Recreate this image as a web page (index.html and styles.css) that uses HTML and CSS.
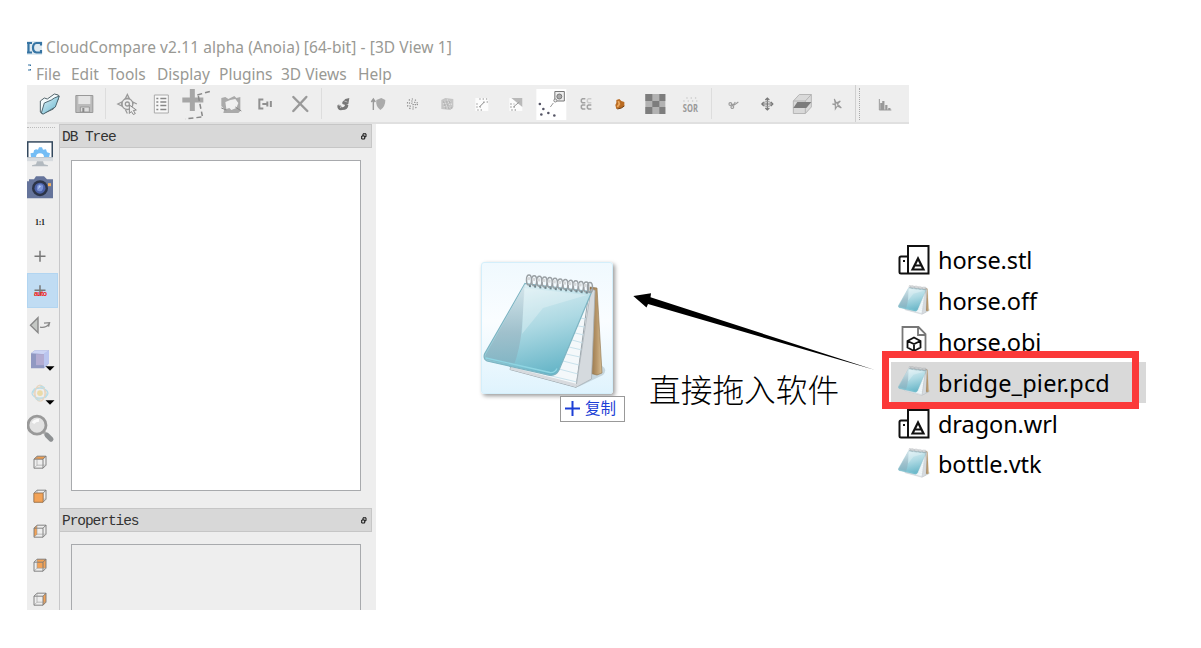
FILE: index.html
```html
<!DOCTYPE html>
<html lang="zh-CN">
<head>
<meta charset="utf-8">
<title>CloudCompare</title>
<link rel="stylesheet" href="styles.css">
</head>
<body>
<svg class="defs" width="0" height="0">
  <defs>
    <linearGradient id="glass" x1="0.2" y1="0" x2="0.5" y2="1">
      <stop offset="0" stop-color="#e3f2f6"/><stop offset="0.5" stop-color="#add9e3"/><stop offset="1" stop-color="#68b6c8"/>
    </linearGradient>
    <linearGradient id="glassSide" x1="0" y1="0" x2="0" y2="1">
      <stop offset="0" stop-color="#d2e4ea"/><stop offset="0.6" stop-color="#9dbcc8"/><stop offset="1" stop-color="#82b3c2"/>
    </linearGradient>
    <linearGradient id="wood" x1="0" y1="0" x2="1" y2="0">
      <stop offset="0" stop-color="#8b6b42"/><stop offset="0.6" stop-color="#b8976a"/><stop offset="1" stop-color="#d6bd93"/>
    </linearGradient>
    <linearGradient id="folder" x1="0" y1="0" x2="1" y2="1">
      <stop offset="0" stop-color="#e4f5fa"/><stop offset="1" stop-color="#5fb2cc"/>
    </linearGradient>
    <symbol id="notepad" viewBox="0 0 124 116">
      <path d="M107 88Q128 92 120 101L95 113z" fill="#889aa2" opacity=".35"/>
      <path d="M107 13l7 1 5 85-5 2-8-2z" fill="url(#wood)" stroke="#8d7047" stroke-width=".6"/>
      <path d="M106 17L93 113.300 27 95.500l1-3 45-70z" fill="#f4f8fa" stroke="#9aa5ab" stroke-width="1"/>
      <path d="M97 44l6 1M95 52l7 1M92 59l9 2M89 66l11 3M86 73l13 3M83 80l14 3M80 87l16 4M76 95l19 5M60 100l34 8" stroke="#c9e2ec" stroke-width="1"/>
      <path d="M108 15l4 1.500-3.500 88.500L93 113.300z" fill="#d5dade" stroke="#a9b1b6" stroke-width=".8"/>
      <path d="M28 93l66 17-.7 3.300L27 95.500z" fill="#d7dade"/>
      <path d="M42 9.500L108.700 17.700 76 96q-3 6-9 5.300L4 87Q0 85 1.500 80z" fill="url(#glass)" stroke="#7db4c2" stroke-width="1.200"/>
      <path d="M42 10L39 53Q37 75 31 91L5 86Q1 84 3 80z" fill="url(#glassSide)" opacity=".85"/>
      <path d="M41 14L104 21 60 34 39 60z" fill="#fff" opacity=".25"/>
      <path d="M3 84l64 14.500q5 .5 7-4" fill="none" stroke="#8fd5e2" stroke-width="1.300"/>
      <g fill="none" stroke="#9aa0a4" stroke-width="1.500">
        <ellipse cx="46" cy="6" rx="2.500" ry="5"/><ellipse cx="51.200" cy="6.700" rx="2.500" ry="5"/><ellipse cx="56.400" cy="7.300" rx="2.500" ry="5"/><ellipse cx="61.600" cy="8" rx="2.500" ry="5"/><ellipse cx="66.800" cy="8.600" rx="2.500" ry="5"/><ellipse cx="72" cy="9.200" rx="2.500" ry="5"/><ellipse cx="77.200" cy="9.900" rx="2.500" ry="5"/><ellipse cx="82.400" cy="10.500" rx="2.500" ry="5"/><ellipse cx="87.600" cy="11.200" rx="2.500" ry="5"/><ellipse cx="92.800" cy="11.800" rx="2.500" ry="5"/><ellipse cx="98" cy="12.400" rx="2.500" ry="5"/><ellipse cx="103.200" cy="13" rx="2.500" ry="5"/><ellipse cx="107" cy="13.500" rx="2.500" ry="5"/>
      </g>
      <path d="M44 4.500L107 12" stroke="#d5d8da" stroke-width="3" stroke-dasharray="3 2.200"/>
      <path d="M46 12L107 19" stroke="#6d858c" stroke-width="2" stroke-dasharray="2 3.200"/>
    </symbol>
    <symbol id="printer" viewBox="0 0 32 32">
      <g fill="none" stroke="#111" stroke-width="2"><path d="M10 2h20.500v27.500H10zM10 12.500H3q-1.500 0-1.500 1.500v14q0 1.500 1.500 1.500h7"/><path d="M14.500 25.500L20 14.500l5.500 11zM17 21.500h6" stroke-width="2.200"/></g>
      <path d="M5 16h2v2H5z" fill="#111"/>
    </symbol>
    <symbol id="cube" viewBox="-8 -8 16 16">
      <path d="M-6-3h9v9h-9zM-6-3l3-3h9v9l-3 3M3-3l3-3" fill="none" stroke="#777" stroke-width=".9"/><path d="M-3-6v9h9M-6 6l3-3" fill="none" stroke="#999" stroke-width=".6"/>
    </symbol>
  </defs>
</svg>

<main class="stage">
  <header class="titlebar">
    <svg class="logo" width="17" height="18" viewBox="0 0 17 18"><path fill="#dfeaf1" d="M0 2h15v14H0z"/><path d="M0 4h5M1.500 4v9M0 13.500h5M14 6.500V4H9.500Q6 4.500 6 8.700t3.500 4.800H14V11" fill="none" stroke="#3674a3" stroke-width="2.200"/></svg>
    <span>CloudCompare v2.11 alpha (Anoia) [64-bit] - [3D View 1]</span>
  </header>
  <nav class="menubar">
    <svg class="mini" width="4" height="8" viewBox="0 0 4 8"><path d="M3.500 2V1H1M1 6h2.500V5" fill="none" stroke="#3674a3" stroke-width="1.200"/></svg>
    <span class="m-file">File</span><span class="m-edit">Edit</span><span class="m-tools">Tools</span><span class="m-display">Display</span><span class="m-plugins">Plugins</span><span class="m-views">3D Views</span><span class="m-help">Help</span>
  </nav>

  <div class="toolbar">
    <svg class="tool" viewBox="-17 -19 34 38"><path d="M-9 8V-3l4-3 3 1 7-5 4 1v4L4 5-7 10z" fill="#f3fafc" stroke="#54656c"/><path d="M-8 9L-5-1 2-4 5-6 10-8 6 3-6 10z" fill="url(#folder)" stroke="#4f6872"/></svg>
    <svg class="tool" viewBox="-17 -19 34 38"><path d="M-8.500-8.500h17v17h-17z" fill="#bbb" stroke="#999"/><path d="M-6-8H6v8H-6z" fill="#e4e4e4"/><path d="M-4 3h9v5h-9z" fill="#ddd" stroke="#999"/><path d="M-2 4h2v4h-2z" fill="#888"/></svg>
    <i class="sep"></i>
    <svg class="tool" viewBox="-17 -19 34 38"><g fill="none" stroke="#999" stroke-width="1.300"><circle r="5.500"/><circle r="2"/><path d="M-9.500 0l4-2v4zM0-9.500l-2 4h4zM9.500 0l-4-2v2M0 9.500l-2-4"/></g><path d="M2 1l7 5-3 .5 2 3-2 1-2-3-2 2z" fill="#eee" stroke="#888"/></svg>
    <svg class="tool" viewBox="-17 -19 34 38"><path d="M-7-9H7V9H-7z" fill="#f8f8f8" stroke="#aaa"/><path d="M-5-5.500h2m2 0h6M-5-2h2m2 0h6M-5 1.500h2m2 0h6M-5 5.500h2m2 0h6" stroke="#888" stroke-width="1.400"/></svg>
    <svg class="tool" viewBox="-17 -19 34 38"><path d="M-14-4H7M-4-15V7" stroke="#a6a6a6" stroke-width="5"/><path d="M1-9l14-4M2-8l4 20M5 13l-16 2" fill="none" stroke="#888" stroke-width="1.500" stroke-dasharray="5 3"/></svg>
    <svg class="tool" viewBox="-17 -19 34 38"><path d="M-10-6l4-1 3 2 6-3 2 2 4-1v14l-2 2H-8l1-4-3-3z" fill="#aaa"/><path d="M-6-2l5-2 5-1 3 4-2 5-5 2-2-2-3 1z" fill="#f0f0f0"/><path d="M-10 4l5 2M4 3l6 4" fill="none" stroke="#888"/></svg>
    <svg class="tool" viewBox="-17 -19 34 38"><path d="M-2-4.500h-4v9h4M-3 0h5M2-2.500v5M5.500-3v6" fill="none" stroke="#909090" stroke-width="2"/></svg>
    <svg class="tool" viewBox="-17 -19 34 38"><path d="M-7-7L7 7M6-7L-7 7" stroke="#999" stroke-width="2.400" stroke-linecap="round"/></svg>
    <i class="sep"></i>
    <svg class="tool" viewBox="-17 -19 34 38"><path d="M-6 2q0-2 3-1l1 2q3 1 4-3l3 1q0 5-6 5-5 1-5-4zM-1-2l3-3 4-1-1 6-3 1-3-1z" fill="#777"/><path d="M-5 1l3 1-1 2M1-3l3 1" stroke="#bbb" fill="none"/></svg>
    <svg class="tool" viewBox="-17 -19 34 38"><path d="M-5 6v-11m-2 3l2-3 2 3" fill="none" stroke="#999" stroke-width="1.400"/><path d="M-2-4l5-2 4 2Q7 3 2 6-3 2-2-4z" fill="#aaa"/></svg>
    <svg class="tool" viewBox="-17 -19 34 38"><g fill="none" stroke="#888" stroke-width="1.200" stroke-dasharray="1.200 2"><circle r="5"/><circle r="3"/><circle r="1"/></g></svg>
    <svg class="tool" viewBox="-17 -19 34 38"><path d="M-6-4l4-2 8 1v8l-3 3-9-1z" fill="#c5c5c5"/><g fill="none" stroke="#eee" stroke-dasharray="1 2"><circle r="4"/><circle r="2"/></g><path d="M-4-2h8M-3 1h6M-2 4h7" stroke="#999" stroke-dasharray="1 2"/></svg>
    <svg class="tool" viewBox="-17 -19 34 38"><path d="M-7-6H6V7H-7z" fill="#fcfcfc"/><path d="M-3 3L2-2" stroke="#888"/><path d="M-3-5H6M1-2h5M-6 0h3M-6 3h5M-5 6h5" stroke="#888" stroke-width="1.200" stroke-dasharray="1.300 2"/></svg>
    <svg class="tool" viewBox="-17 -19 34 38"><path d="M-7-6H6V7H-7z" fill="#fcfcfc"/><path d="M-5-6H6V3z" fill="#b9b9b9"/><path d="M-3 3L3-2" stroke="#999"/><path d="M-6 0h4M-6 3h5M-5 6h5" stroke="#777" stroke-width="1.200" stroke-dasharray="1.300 2"/></svg>
    <svg class="tool" viewBox="-17 -19 34 38"><path d="M-15-15h30v31h-30z" fill="#fff"/><g fill="#556"><circle cx="-11.500" cy="0" r="1.300"/><circle cx="-8" cy="5" r="1.300"/><circle cx="-10" cy="10.500" r="1.300"/><circle cx="-3" cy="9" r="1.300"/><circle cx="3" cy="11.500" r="1.300"/></g><path d="M-1 3L5-5" stroke="#999" stroke-dasharray="5 2"/><path d="M3.500-12.500H13V-3H3.500z" fill="#eee" stroke="#777"/><circle cx="8" cy="-7.500" r="2.500" fill="#aaa" stroke="#777"/><circle cx="4" cy="-3.500" r="1.500" fill="#eee" stroke="#888"/></svg>
    <svg class="tool" viewBox="-17 -19 34 38"><g fill="none" stroke="#a2a2a2" stroke-width="1.500"><path d="M-1-5.300h-3l-1 1v2l1 1h3M-1 .9h-3l-1 1v2l1 1h3M5 .9H2l-1 1v2l1 1h3"/><path d="M5-5.300H2l-1 1v2l1 1h3" stroke="#ccc"/></g></svg>
    <svg class="tool" viewBox="-17 -19 34 38"><path d="M-4-4l3-1 2 2 3 1v4l-3 2-5 1-1-4 1-2z" fill="#b96b22"/><path d="M-2-3l1 3-2 3" fill="none" stroke="#eba75d" stroke-width="1.800"/><path d="M-3 5l4-1 3-2" stroke="#6d3e13" fill="none"/></svg>
    <svg class="tool" viewBox="-17 -19 34 38"><path d="M-10-10h20v20h-20z" fill="#b2b2b2"/><path d="M-10-10h7v7h-7zM4-10h6v7H4zM-3-3h7v6h-7zM-10 3h7v7h-7zM4 3h6v7H4z" fill="#7d7d7d"/></svg>
    <svg class="tool" viewBox="-17 -19 34 38"><text class="sor" x="-7.500" y="8" textLength="15" lengthAdjust="spacingAndGlyphs">SOR</text><path d="M-7-3H7M-4-6H8" stroke="#bbb" stroke-dasharray="1.300 3"/></svg>
    <i class="sep"></i>
    <svg class="tool" viewBox="-17 -19 34 38"><g fill="none" stroke="#999" stroke-width="1.100"><circle cx="-3" cy="0" r="1.400"/><circle cx="-1" cy="3" r="1.400"/><path d="M-2 0l3 1 4-3M-1 2l3-4"/></g></svg>
    <svg class="tool" viewBox="-17 -19 34 38"><path d="M0-6V6M-5.500 0h11M-2-4l2-2 2 2M-2 4l2 2 2-2M-3.500-2l-2 2 2 2M3.500-2l2 2-2 2" fill="none" stroke="#777" stroke-width="1.200"/><ellipse rx="4" ry="2.500" fill="none" stroke="#999"/></svg>
    <svg class="tool" viewBox="-17 -19 34 38"><path d="M-9-3l6-6.500H9V3L3 9.500H-9zM-9-3H3v12.500M3-3l6-6.500" fill="#d9d9d9" stroke="#b0b0b0" stroke-width=".9"/><path d="M-9 4l4-6H9L4 4z" fill="#7b7b7b"/></svg>
    <svg class="tool" viewBox="-17 -19 34 38"><path d="M-3-5l2 4 4-2-3 3 4 4-4-2-2 3V1l-3-1h3z" fill="none" stroke="#999" stroke-width="1.100"/></svg>
    <i class="sep end"></i><i class="grip"></i>
    <svg class="tool hist" viewBox="-17 -19 34 38"><path d="M-5-5V6H7" fill="none" stroke="#999"/><path d="M-3 6V-1M-1 6V-3M2 6V1M5 6V4" stroke="#999" stroke-width="2.200"/></svg>
  </div>

  <div class="workspace">
    <aside class="sidebar">
      <svg class="side" viewBox="-13 -17 31 34"><path d="M-13-12h26V5h-26z" fill="#34495e"/><path d="M-11.500-10.500h23V4h-23z" fill="#fff"/><path d="M-9 4l-.5-4 3-.5L-6-3l2-1 2 .5L-1-6h3l1 2.500 3-.5 1 3 3 1-1 4H4q0-4-4-4t-4 4z" fill="#74bdf5"/><path d="M-13 4h26v4h-26z" fill="#d7dbdf"/><path d="M-3 8h6l1 3 4 1v1H-8v-1l4-1z" fill="#b2b9bf"/></svg>
      <svg class="side" viewBox="-13 -17 31 34"><path d="M-11-8h5l2-3h8l3 3h6v19h-26V-6h2z" fill="#65749b"/><circle cy="1" r="8" fill="#2c3448"/><circle cy="1" r="5.500" fill="#4c62a7"/><path d="M-3 3q-1-6 3-6 4 0 3 4-1 4-4 3z" fill="#7b93d6"/><path d="M-2 2l1-4 2 1z" fill="#b9cdf5"/><path d="M8-4h3v3H8z" fill="#f1b15e"/></svg>
      <svg class="side" viewBox="-13 -17 31 34"><text class="ratio" x="-5" y="3" textLength="10">1:1</text></svg>
      <svg class="side" viewBox="-13 -17 31 34"><path d="M-5.500 0h11M0-5.500v11" stroke="#777" stroke-width="1.500"/></svg>
      <svg class="side active" viewBox="-13 -17 31 34"><path d="M-5.500 0h11M0-5v10" stroke="#777" stroke-width="1.500"/><text class="auto" x="-6" y="5.800" textLength="13">auto</text></svg>
      <svg class="side" viewBox="-13 -17 31 34"><path d="M-2-7.500v15L-9.500 0z" fill="#c5c8c5" stroke="#888" stroke-width="1.400"/><path d="M0 2q6 1 9-3M4-2l5.500-.5-1 4" fill="none" stroke="#888" stroke-width="1.400"/></svg>
      <svg class="side" viewBox="-13 -17 31 34"><path d="M-9-6l4-3H9V4L4 9H-9z" fill="#9098c2"/><path d="M-9-6l4-3H9L5-5z" fill="#ccd4f4"/><path d="M4-6l5-3V4L4 9z" fill="#bac5ef"/><path d="M-4-5h8V6h-8z" fill="#b3acd2"/><path d="M5.500 7h9l-4.500 4.500z"/></svg>
      <svg class="side" viewBox="-13 -17 31 34"><g fill="none" stroke-width="1.200"><circle r="6" stroke="#e9d7bd"/><ellipse rx="8" ry="5" stroke="#b6dce9"/><ellipse rx="5" ry="8" stroke="#e8d4bf"/><circle r="7" stroke="#b9dfe9" stroke-dasharray="5 6"/></g><circle r="2.800" fill="#ebdba8"/><path d="M5.500 7h9l-4.500 4.500z"/></svg>
      <svg class="side" viewBox="-13 -17 31 34"><path d="M4 4l3 3" stroke="#aaa" stroke-width="3"/><path d="M7 7l4 4" stroke="#8e9193" stroke-width="5" stroke-linecap="round"/><circle cx="-3" cy="-3" r="9" fill="#e2e2e2" stroke="#999" stroke-width="2.800"/><path d="M-7-5q2-3 6-3" stroke="#fafafa" stroke-width="3" fill="none"/></svg>
      <svg class="side" viewBox="-13 -17 31 34"><path d="M-6-3l3-3h9l-3 3z" fill="#ed9c50"/><use href="#cube" x="-8" y="-8" width="16" height="16"/></svg>
      <svg class="side" viewBox="-13 -17 31 34"><use href="#cube" x="-8" y="-8" width="16" height="16"/><path d="M-6-3h9v9h-9z" fill="#f3a357" stroke="#b07a45" stroke-width=".8"/></svg>
      <svg class="side" viewBox="-13 -17 31 34"><path d="M-6-3l3-3v9l-3 3z" fill="#f3a357"/><use href="#cube" x="-8" y="-8" width="16" height="16"/></svg>
      <svg class="side" viewBox="-13 -17 31 34"><path d="M-3-6h9v9h-9z" fill="#f3a357"/><use href="#cube" x="-8" y="-8" width="16" height="16"/></svg>
      <svg class="side" viewBox="-13 -17 31 34"><path d="M3-3l3-3v9l-3 3z" fill="#f3a357"/><use href="#cube" x="-8" y="-8" width="16" height="16"/></svg>
    </aside>

    <section class="docks">
      <div class="dock-title"><span>DB Tree</span><svg width="6" height="7" viewBox="0 0 6 7"><path d="M2 3V.8h3v3H4M.7 3h3v3h-3z" fill="none" stroke="#111" stroke-width="1"/></svg></div>
      <div class="tree"></div>
      <div class="dock-title"><span>Properties</span><svg width="6" height="7" viewBox="0 0 6 7"><path d="M2 3V.8h3v3H4M.7 3h3v3h-3z" fill="none" stroke="#111" stroke-width="1"/></svg></div>
      <div class="props"></div>
    </section>

    <section class="view">
      <div class="drag-tile"><svg width="124" height="116"><use href="#notepad"/></svg></div>
      <div class="copy-tip"><svg width="15" height="15" viewBox="0 0 15 15"><path d="M7.500 0v15M0 7.500h15" stroke="#1c3fd6" stroke-width="2"/></svg><span>复制</span></div>
      <div class="note">直接拖入软件</div>
      <svg class="arrow" width="244" height="80" viewBox="0 0 244 80"><path d="M1.300 6L19 3.300l-.5 4L243 80 16 14l-1.500 3.500z"/></svg>
    </section>

    <section class="files">
      <div class="file"><svg width="32" height="32"><use href="#printer"/></svg><span>horse.stl</span></div>
      <div class="file"><svg class="pad" width="32" height="30"><use href="#notepad"/></svg><span>horse.off</span></div>
      <div class="file"><svg width="32" height="32" viewBox="0 0 32 32"><path d="M4.500 1h16l7 7v23h-23zM20 1v8h8" fill="#fff" stroke="#777" stroke-width="1.800"/><path d="M16 11.500l6.500 3.500v6.500L16 25l-6.500-3.500V15zM9.500 15L16 18l6.500-3M16 18v7" fill="none" stroke="#111" stroke-width="1.800"/></svg><span>horse.obj</span></div>
      <div class="file picked"><svg class="pad" width="32" height="30"><use href="#notepad"/></svg><span class="long">bridge_pier.pcd</span><b class="frame"></b></div>
      <div class="file"><svg width="32" height="32"><use href="#printer"/></svg><span>dragon.wrl</span></div>
      <div class="file"><svg class="pad" width="32" height="30"><use href="#notepad"/></svg><span>bottle.vtk</span></div>
    </section>
  </div>
</main>
</body>
</html>
```
FILE: styles.css
```css
* { box-sizing: border-box; }
body { margin: 0; background: #fff; font-family: "Noto Sans", "Noto Sans CJK SC", sans-serif; overflow: hidden; }
.defs { position: absolute; }
.stage { width: 1201px; height: 648px; padding: 36px 0 38px 27px; display: flex; flex-direction: column; }
.titlebar { height: 25px; padding-bottom: 2px; display: flex; align-items: center; color: #999994; font-size: 15.5px; line-height: 23px; letter-spacing: .08px; white-space: nowrap; }
.logo { flex: none; margin-right: 2px; }
.menubar { height: 24px; padding-top: 2px; display: flex; align-items: center; color: #999994; font-size: 15.5px; line-height: 22px; white-space: nowrap; }
.menubar span { flex: none; }
.mini { align-self: flex-start; margin: 1px 5px 0 0; }
.m-file { width: 35px; }
.m-edit { width: 37px; }
.m-tools { width: 49px; }
.m-display { width: 62px; }
.m-plugins { width: 62px; }
.m-views { width: 77px; }

.toolbar { width: 882px; height: 39px; padding-left: 5px; display: flex; align-items: center; background: #eee; border-bottom: 2px solid #e0e0e0; flex: none; }
.tool { width: 34.680px; height: 38px; flex: none; overflow: visible; position: relative; top: .5px; }
.sep { width: 1px; height: 31px; margin: 0 4px 0 3.300px; background: #ddd; flex: none; }
.sep.end { height: 37px; margin: 0 3px 0 1px; background: #d0d0d0; }
.grip { height: 32px; border-left: 1px dotted #aaa; }
.hist { margin-left: 7px; }
.sor { font: bold 11px "Open Sans", sans-serif; fill: #999; }

.workspace { flex: 1; min-height: 0; display: flex; overflow: visible; }
.sidebar { width: 32px; height: 486px; padding-top: 11px; background: #eee; overflow: hidden; flex: none; }
.sidebar::before { content: ""; display: block; height: 0; margin: -8px 4px 8px 0; border-top: 1px dotted #bbb; }
.side { display: block; width: 31px; height: 34.350px; }
.active { background: #c0dcf3; outline: 1px solid #b2d5f1; outline-offset: -1px; }
.ratio { font: bold 8px "Liberation Serif", serif; fill: #222; }
.auto { font: bold 7px "Liberation Sans", sans-serif; fill: #f02020; }

.docks { width: 317px; height: 486px; padding-right: 4px; display: flex; flex-direction: column; background: #eee; border-left: 1px solid #c8c8ca; flex: none; }
.dock-title { height: 24px; padding: 2px 4px 0 2px; display: flex; align-items: center; justify-content: space-between; background: #d8d8d8; border: 1px solid #c6c6c6; border-left: 0; font: 14.500px/20px "Liberation Mono", monospace; letter-spacing: -1.050px; color: #333; flex: none; }
.dock-title svg { margin-bottom: 2px; }
.tree { height: 331px; margin: 12px 11px 17px 11px; background: #fff; border: 1px solid #a8aaad; flex: none; }
.props { flex: 1; margin: 12px 11px 0 11px; border: 1px solid #a8aaad; border-bottom: 0; }

.view { width: 515px; position: relative; flex: none; }
.drag-tile { position: absolute; left: 105px; top: 138px; width: 132px; height: 132px; padding: 11px 0 0 1px; border: 1px solid #d4effb; border-radius: 3px; background: linear-gradient(#f0f9fe, #fafdff 45%, #dff3fd); box-shadow: 2px 2px 4px rgba(0,0,0,.4); }
.drag-tile svg { display: block; }
.copy-tip { position: absolute; left: 184px; top: 272px; width: 65px; height: 26px; padding: 0 0 1px 4px; display: flex; align-items: center; gap: 5px; background: #fff; border: 1px solid #999; color: #1c3fd6; font: 15.500px/20px "Noto Sans CJK SC", sans-serif; white-space: nowrap; }
.copy-tip span { margin-top: -3px; }
.note { position: absolute; left: 273px; top: 241px; font: 300 31.700px/46px "Noto Sans CJK SC", sans-serif; color: #000; white-space: nowrap; }
.arrow { position: absolute; left: 256px; top: 166px; }

.files { width: 255px; padding-top: 116px; display: flex; flex-direction: column; flex: none; }
.file { height: 40.800px; padding-left: 7px; display: flex; align-items: center; gap: 8px; font-size: 23.500px; line-height: 36px; letter-spacing: -.08px; color: #000; white-space: nowrap; flex: none; }
.file svg { flex: none; }
.file .pad { margin-top: -3px; }
.long { letter-spacing: .2px; }
.picked { position: relative; background: #d9d9d9; }
.frame { position: absolute; left: -9px; top: -11px; width: 257px; height: 58px; border: 7px solid #fb3939; }
```
